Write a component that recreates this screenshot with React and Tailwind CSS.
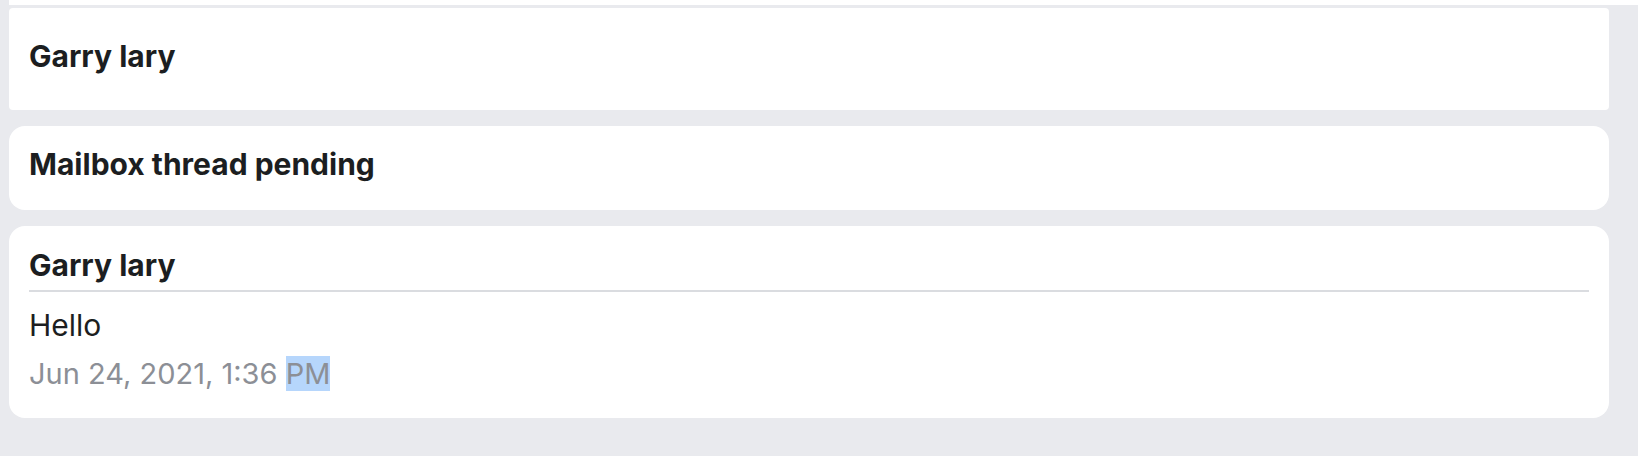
export default function App() {
  const font = { fontFamily: 'Inter, "Noto Sans", sans-serif' };
  return (
    <div className="w-[1638px] h-[456px] bg-[#e9eaee] overflow-hidden" style={font}>
      <div className="ml-[9px] h-[5px] bg-white" />
      <div className="ml-[9px] w-[1600px] mt-[3px] flex flex-col gap-4">
        <div className="bg-white rounded-[4px] px-5 pt-[30px] pb-[36px]">
          <div className="text-[30px] leading-[36px] font-bold text-[#1c1e21]">Garry lary</div>
        </div>
        <div className="bg-white rounded-2xl px-5 pt-[20px] pb-[28px]">
          <div className="text-[30px] leading-[36px] font-bold text-[#1c1e21]">Mailbox thread pending</div>
        </div>
        <div className="bg-white rounded-2xl px-5 pt-[21px] pb-[26px]">
          <div className="text-[30px] leading-[36px] font-bold text-[#1c1e21]">Garry lary</div>
          <div className="mt-[7px] h-[2px] bg-[#dadce0]" />
          <div className="mt-[15px] text-[30px] leading-[36px] text-[#1c1e21]">Hello</div>
          <div className="mt-[13px] text-[29px] leading-[36px] text-[#8c8f96]">
            Jun 24, 2021, 1:36 <span className="bg-[#b6d6fc]">PM</span>
          </div>
        </div>
      </div>
    </div>
  );
}
